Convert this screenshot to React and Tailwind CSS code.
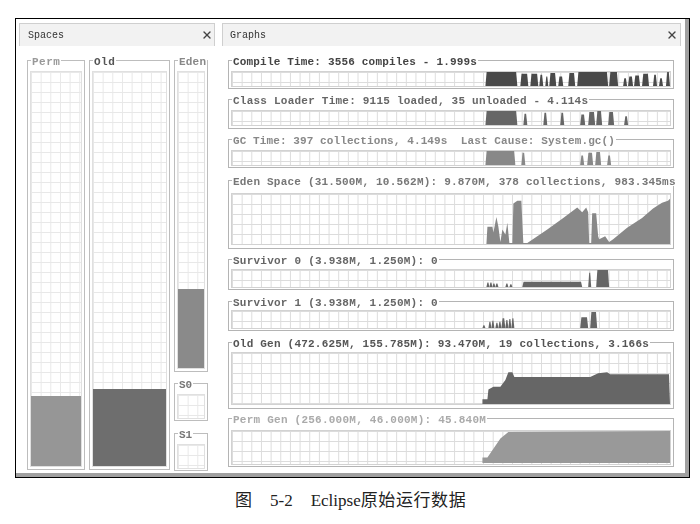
import React from 'react';
import { X } from 'lucide-react';

const plotGrid =
  "border border-[#d2d2d2] bg-[linear-gradient(to_right,#dcdcdc_1px,transparent_1px),linear-gradient(to_bottom,#dcdcdc_1px,transparent_1px)] bg-[size:9.67px_10px]";
const spaceGrid =
  "border border-[#e0e0e0] bg-[linear-gradient(to_right,#e8e8e8_1px,transparent_1px),linear-gradient(to_bottom,#e8e8e8_1px,transparent_1px)] bg-[size:9.67px_10px]";
const legendText = "font-['Liberation_Mono',monospace] font-bold text-[11px] leading-[12px] whitespace-pre translate-y-[2px]";

const graphs = [
  {
    title: 'Compile Time: 3556 compiles - 1.999s',
    text: 'text-[#444] tracking-[0.18px]', box: 'h-[35px]', plot: 'h-[16px] mt-[5px]', fill: '#4a4a4a', y0: 71, h: 16,
    bars: [[485,517,71],[520,528,73],[530,538,73],[539,543,74],[545,548,76],[549,556,72],[558,563,76],[568,575,72],[577,608,71],[609,618,71],[623,627,78],[628,633,76],[634,640,75],[642,649,73],[653,657,74],[659,663,78],[666,670,71]],
  },
  {
    title: 'Class Loader Time: 9115 loaded, 35 unloaded - 4.114s',
    text: 'text-[#666] tracking-[0.23px]', box: 'h-[36px] mt-[4px]', plot: 'h-[16px] mt-[5px]', fill: '#666', y0: 110, h: 16,
    bars: [[485,517,110],[523,527,113],[543,547,112],[560,564,112],[580,585,114],[588,595,111],[596,602,110],[608,614,111],[624,628,116]],
  },
  {
    title: 'GC Time: 397 collections, 4.149s  Last Cause: System.gc()',
    text: 'text-[#888] tracking-[0.1px]', box: 'h-[35px] mt-[4px]', plot: 'h-[16px] mt-[5px]', fill: '#888', y0: 150, h: 16,
    bars: [[485,515,150],[521,525,152],[580,584,155],[587,593,152],[595,601,151],[607,611,155]],
  },
  {
    title: 'Eden Space (31.500M, 10.562M): 9.870M, 378 collections, 983.345ms',
    text: 'text-[#777] tracking-[0.21px]', box: 'h-[75px] mt-[6px]', plot: 'h-[52px] mt-[7px]', fill: '#888', y0: 193, h: 52,
    area: '486,245 487,227 492,227 493,233 496,217 498,227 500,243 502,230 505,235 507,223 509,244 512,244 513,203 517,200 521,200 523,244 527,244 547,230 563,218 577,207 582,212 586,207 588,212 589,244 591,244 592,213 596,213 598,237 599,240 605,237 609,243 613,240 627,228 642,218 653,208 662,202 668,200 670,198 670,245',
  },
  {
    title: 'Survivor 0 (3.938M, 1.250M): 0',
    text: 'text-[#666] tracking-[0.23px]', box: 'h-[37px] mt-[4px]', plot: 'h-[19px] mt-[4px]', fill: '#666', y0: 269, h: 19,
    bars: [[486,489,283],[489,492,283],[492,495,284],[495,498,284],[505,508,284],[509,512,285],[522,582,282],[588,591,272],[596,609,269]],
  },
  {
    title: 'Survivor 1 (3.938M, 1.250M): 0',
    text: 'text-[#666] tracking-[0.23px]', box: 'h-[36px] mt-[5px]', plot: 'h-[19px] mt-[3px]', fill: '#666', y0: 310, h: 19,
    bars: [[482,485,326],[488,491,322],[491,494,321],[495,498,323],[498,501,322],[501,505,318],[505,508,320],[508,511,319],[511,514,318],[580,588,317],[590,597,311]],
  },
  {
    title: 'Old Gen (472.625M, 155.785M): 93.470M, 19 collections, 3.166s',
    text: 'text-[#555] tracking-[0.22px]', box: 'h-[73px] mt-[5px]', plot: 'h-[53px] mt-[4px]', fill: '#666', y0: 352, h: 53,
    area: '482,405 482,400 487,400 488,390 493,387 500,387 505,380 508,372 512,372 514,377 590,377 598,373 607,372 610,374 669,374 670,405',
  },
  {
    title: 'Perm Gen (256.000M, 46.000M): 45.840M',
    text: 'text-[#aaa] tracking-[0.24px]', box: 'h-[55px] mt-[3px]', plot: 'h-[35px] mt-[6px]', fill: '#999', y0: 430, h: 35,
    area: '482,464 482,458 487,458 500,438 508,431 670,430 670,464',
  },
];

// bars lean in a little at the top, like the sampled peaks
function barPoints(a, b, top, bottom) {
  const t = Math.min(1.2, (b - a) / 3);
  return `${a},${bottom} ${a + t},${top} ${b - t},${top} ${b},${bottom}`;
}

function Chart({ g }) {
  const bottom = g.y0 + g.h;
  return (
    <svg viewBox={`231 ${g.y0} 439 ${g.h}`} className="block w-full h-full" preserveAspectRatio="none">
      {g.bars && g.bars.map(([a, b, top], i) => (
        <polygon key={i} points={barPoints(a, b, top, bottom)} fill={g.fill} />
      ))}
      {g.area && <polygon points={g.area} fill={g.fill} />}
    </svg>
  );
}

function Graph({ g }) {
  return (
    <fieldset className={`${g.box} min-w-0 border border-[#b4b4b4] px-[2px]`}>
      <legend className={`${legendText} ${g.text} ml-[1px] px-[1px]`}>{g.title}</legend>
      <div className={`${g.plot} ${plotGrid}`}>
        <Chart g={g} />
      </div>
    </fieldset>
  );
}

function Space({ label, box, text, plot, fill }) {
  return (
    <fieldset className={`${box} min-w-0 border border-[#bdbdbd] px-[2px]`}>
      <legend className={`${legendText} ${text} ml-[1px] px-[1px]`}>{label}</legend>
      <div className={`${plot} ${spaceGrid} flex flex-col justify-end mt-[5px]`}>
        {fill && <div className={fill} />}
      </div>
    </fieldset>
  );
}

function Tab({ title, box }) {
  return (
    <div className={`${box} h-[23px] shrink-0 flex items-center justify-between bg-[#f2f2f2] border-t border-x border-[#cfcfcf]`}>
      <span className="font-['Liberation_Mono',monospace] text-[10px] text-[#333]">{title}</span>
      <X size={12} strokeWidth={2.75} className="text-[#444]" />
    </div>
  );
}

export default function App() {
  return (
    <div className="w-[700px] h-[524px] bg-white pt-[18px] pl-[15px] overflow-hidden">
      <div className="w-[675px] h-[460px] border border-black blur-[0.3px]">
        <div className="w-full h-full bg-white border-r-[4px] border-b-[4px] border-[#a0a0a0] pl-[3px] pt-[4px] flex gap-[7px]">
          {/* Spaces */}
          <div className="w-[196px] shrink-0">
            <Tab title="Spaces" box="w-[196px] pl-[8px] pr-[1px]" />
            <div className="flex gap-[4px] pl-[8px] pt-[8px]">
              <Space label="Perm" box="w-[58px] h-[416px]" text="text-[#999] tracking-[0.5px]" plot="h-[396px]" fill="h-[70px] bg-[#969696]" />
              <Space label="Old" box="w-[81px] h-[416px]" text="text-[#555] tracking-[0.5px]" plot="h-[396px]" fill="h-[77px] bg-[#6e6e6e]" />
              <div className="w-[34px] flex flex-col">
                <Space label="Eden" box="h-[318px]" text="text-[#888] tracking-[0.2px]" plot="h-[298px]" fill="h-[79px] bg-[#8a8a8a]" />
                <Space label="S0" box="h-[44px] mt-[5px]" text="text-[#777]" plot="h-[25px]" />
                <Space label="S1" box="h-[44px] mt-[6px]" text="text-[#777]" plot="h-[25px]" />
              </div>
            </div>
          </div>

          {/* Graphs */}
          <div className="w-[459px] shrink-0">
            <Tab title="Graphs" box="w-[459px] pl-[7px] pr-[2px]" />
            <div className="pl-[6px] pr-[7px] pt-[8px] flex flex-col">
              {graphs.map((g) => <Graph key={g.title} g={g} />)}
            </div>
          </div>
        </div>
      </div>

      {/* Caption */}
      <div className="flex gap-[18px] pl-[220px] mt-[12px] font-['Liberation_Serif','Noto_Sans_CJK_SC',serif] text-[17px] leading-[22px] text-[#222]">
        <span>图</span>
        <span>5-2</span>
        <span>Eclipse<span className="tracking-[0.6px]">原始运行数据</span></span>
      </div>
    </div>
  );
}
